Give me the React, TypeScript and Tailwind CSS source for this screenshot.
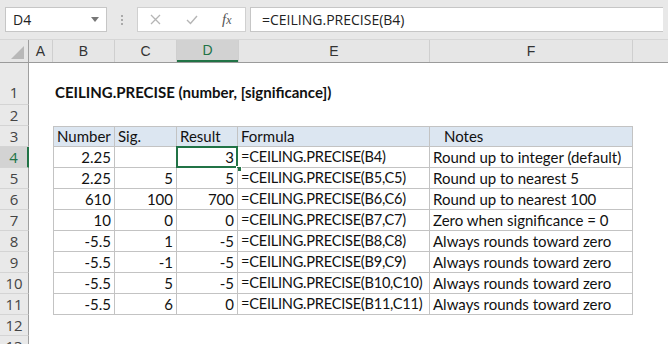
import React from 'react'

const font = { fontFamily: 'Lato, "Open Sans", sans-serif' }

const data = [
  ['2.25', '', '3', '=CEILING.PRECISE(B4)', 'Round up to integer (default)'],
  ['2.25', '5', '5', '=CEILING.PRECISE(B5,C5)', 'Round up to nearest 5'],
  ['610', '100', '700', '=CEILING.PRECISE(B6,C6)', 'Round up to nearest 100'],
  ['10', '0', '0', '=CEILING.PRECISE(B7,C7)', 'Zero when significance = 0'],
  ['-5.5', '1', '-5', '=CEILING.PRECISE(B8,C8)', 'Always rounds toward zero'],
  ['-5.5', '-1', '-5', '=CEILING.PRECISE(B9,C9)', 'Always rounds toward zero'],
  ['-5.5', '5', '-5', '=CEILING.PRECISE(B10,C10)', 'Always rounds toward zero'],
  ['-5.5', '6', '0', '=CEILING.PRECISE(B11,C11)', 'Always rounds toward zero'],
]

function RowHead({ n, tall, active }: { n: number; tall?: boolean; active?: boolean }) {
  return (
    <div
      className={
        'w-[29px] shrink-0 flex justify-center text-[15px] border-b border-[#d4d4d4] ' +
        (tall ? 'items-end pb-[1px] ' : 'items-center ') +
        (active
          ? 'bg-[#d3d3d3] text-[#217346] border-r-2 border-r-[#217346]'
          : 'bg-[#e9e9e9] text-[#444] border-r border-r-[#9f9f9f]')
      }
      style={{ fontFamily: '"Open Sans", sans-serif' }}
    >
      {n}
    </div>
  )
}

function Cell({ w, children, right, head, first, indent, tight }: {
  w: string
  children?: React.ReactNode
  right?: boolean
  head?: boolean
  first?: boolean
  indent?: boolean
  tight?: boolean
}) {
  return (
    <div
      className={
        w +
        ' shrink-0 h-full flex items-center whitespace-nowrap overflow-hidden border-r border-b border-[#c3c3c3] text-[#111] ' +
        (tight ? 'text-[14.6px] tracking-[-0.25px] ' : 'text-[15px] ') +
        (right ? 'justify-end pr-[3px] ' : indent ? 'pl-[14px] ' : 'pl-[3px] ') +
        (head ? 'bg-[#dce6f1] ' : 'bg-white ') +
        (first ? 'border-l ' : '')
      }
    >
      {children}
    </div>
  )
}

export default function App() {
  return (
    <div className="w-[668px] h-[344px] overflow-hidden bg-white flex flex-col" style={font}>
      {/* formula bar */}
      <div className="h-[40px] shrink-0 bg-[#e8e8e8] flex items-center px-[5px] border-b border-[#d6d6d6]" style={{ fontFamily: '"Open Sans", sans-serif' }}>
        <div className="w-[102px] h-[25px] bg-white border border-[#c6c6c6] flex items-center justify-between pl-[7px] pr-[7px] text-[14px] text-[#222]">
          <span>D4</span>
          <svg width="8" height="5" viewBox="0 0 8 5"><path d="M0 0h8L4 5z" fill="#777" /></svg>
        </div>
        <div className="w-[30px] flex flex-col items-center gap-[2px]">
          <span className="w-[2px] h-[2px] bg-[#aaa]" />
          <span className="w-[2px] h-[2px] bg-[#aaa]" />
          <span className="w-[2px] h-[2px] bg-[#aaa]" />
        </div>
        <div className="w-[109px] h-[25px] bg-white border border-[#d0d0d0] flex items-center">
          <svg className="ml-[12px]" width="11" height="11" viewBox="0 0 11 11">
            <path d="M1 1l9 9M10 1l-9 9" stroke="#b5b5b5" strokeWidth="1.3" />
          </svg>
          <svg className="ml-[25px]" width="12" height="10" viewBox="0 0 12 10">
            <path d="M1 5l3.5 3.5L11 1" stroke="#b5b5b5" strokeWidth="1.4" fill="none" />
          </svg>
          <span className="ml-[24px] text-[15px] italic text-[#555]" style={{ fontFamily: '"Liberation Serif", serif' }}>
            f<span className="text-[12px]">x</span>
          </span>
        </div>
        <div className="ml-[4px] flex-1 h-[25px] bg-white border border-[#c6c6c6] border-r-0 flex items-center pl-[11px] text-[14px] text-[#222]">
          =CEILING.PRECISE(B4)
        </div>
      </div>

      {/* column headers */}
      <div className="h-[23px] shrink-0 flex bg-[#e6e6e6] border-b border-[#9b9b9b] text-[14px] text-[#333]" style={{ fontFamily: '"Liberation Sans", sans-serif' }}>
        <div className="w-[29px] shrink-0 flex items-end justify-end pr-[4px] pb-[3px] border-r border-[#9f9f9f]">
          <svg width="13" height="13" viewBox="0 0 13 13"><path d="M13 0v13H0z" fill="#b8b8b8" /></svg>
        </div>
        <div className="w-[24px] shrink-0 flex items-center justify-center border-r border-[#cfcfcf]">A</div>
        <div className="w-[62px] shrink-0 flex items-center justify-center border-r border-[#cfcfcf]">B</div>
        <div className="w-[62px] shrink-0 flex items-center justify-center border-r border-[#cfcfcf]">C</div>
        <div className="w-[61px] shrink-0 flex items-center justify-center bg-[#d2d2d2] text-[#217346] border-b-2 border-[#217346]">D</div>
        <div className="w-[192px] shrink-0 flex items-center justify-center border-r border-[#cfcfcf] border-l">E</div>
        <div className="w-[203px] shrink-0 flex items-center justify-center border-r border-[#cfcfcf]">F</div>
        <div className="flex-1" />
      </div>

      {/* row 1 */}
      <div className="h-[42px] shrink-0 flex">
        <RowHead n={1} tall />
        <div className="w-[24px] shrink-0" />
        <div className="flex-1 flex items-end pb-[2px] pl-[2px] text-[15px] font-bold text-[#111] whitespace-nowrap">
          CEILING.PRECISE (number, [significance])
        </div>
      </div>

      {/* row 2 */}
      <div className="h-[21px] shrink-0 flex">
        <RowHead n={2} />
      </div>

      {/* row 3 */}
      <div className="h-[21px] shrink-0 flex">
        <RowHead n={3} />
        <div className="w-[24px] shrink-0" />
        <div className="flex h-full border-t border-[#c3c3c3]">
          <Cell w="w-[62px]" head first>Number</Cell>
          <Cell w="w-[62px]" head>Sig.</Cell>
          <Cell w="w-[61px]" head>Result</Cell>
          <Cell w="w-[192px]" head>Formula</Cell>
          <Cell w="w-[203px]" head indent>Notes</Cell>
        </div>
      </div>

      {data.map((r, i) => (
        <div key={i} className="h-[21px] shrink-0 flex">
          <RowHead n={i + 4} active={i === 0} />
          <div className="w-[24px] shrink-0" />
          <Cell w="w-[62px]" right first>{r[0]}</Cell>
          <Cell w="w-[62px]" right>{r[1]}</Cell>
          <div className="relative h-full">
            <Cell w="w-[61px]" right>{r[2]}</Cell>
            {i === 0 && (
              <>
                <div className="absolute left-[-1px] top-[-1px] w-[62px] h-[22px] border-2 border-[#217346]" />
                <div className="absolute right-[-4px] bottom-[-4px] w-[6px] h-[6px] bg-[#217346] border border-white" />
              </>
            )}
          </div>
          <Cell w="w-[192px]" tight>{r[3]}</Cell>
          <Cell w="w-[203px]">{r[4]}</Cell>
        </div>
      ))}

      <div className="h-[21px] shrink-0 flex">
        <RowHead n={12} />
      </div>
      <div className="h-[21px] shrink-0 flex">
        <RowHead n={13} />
      </div>
    </div>
  )
}
